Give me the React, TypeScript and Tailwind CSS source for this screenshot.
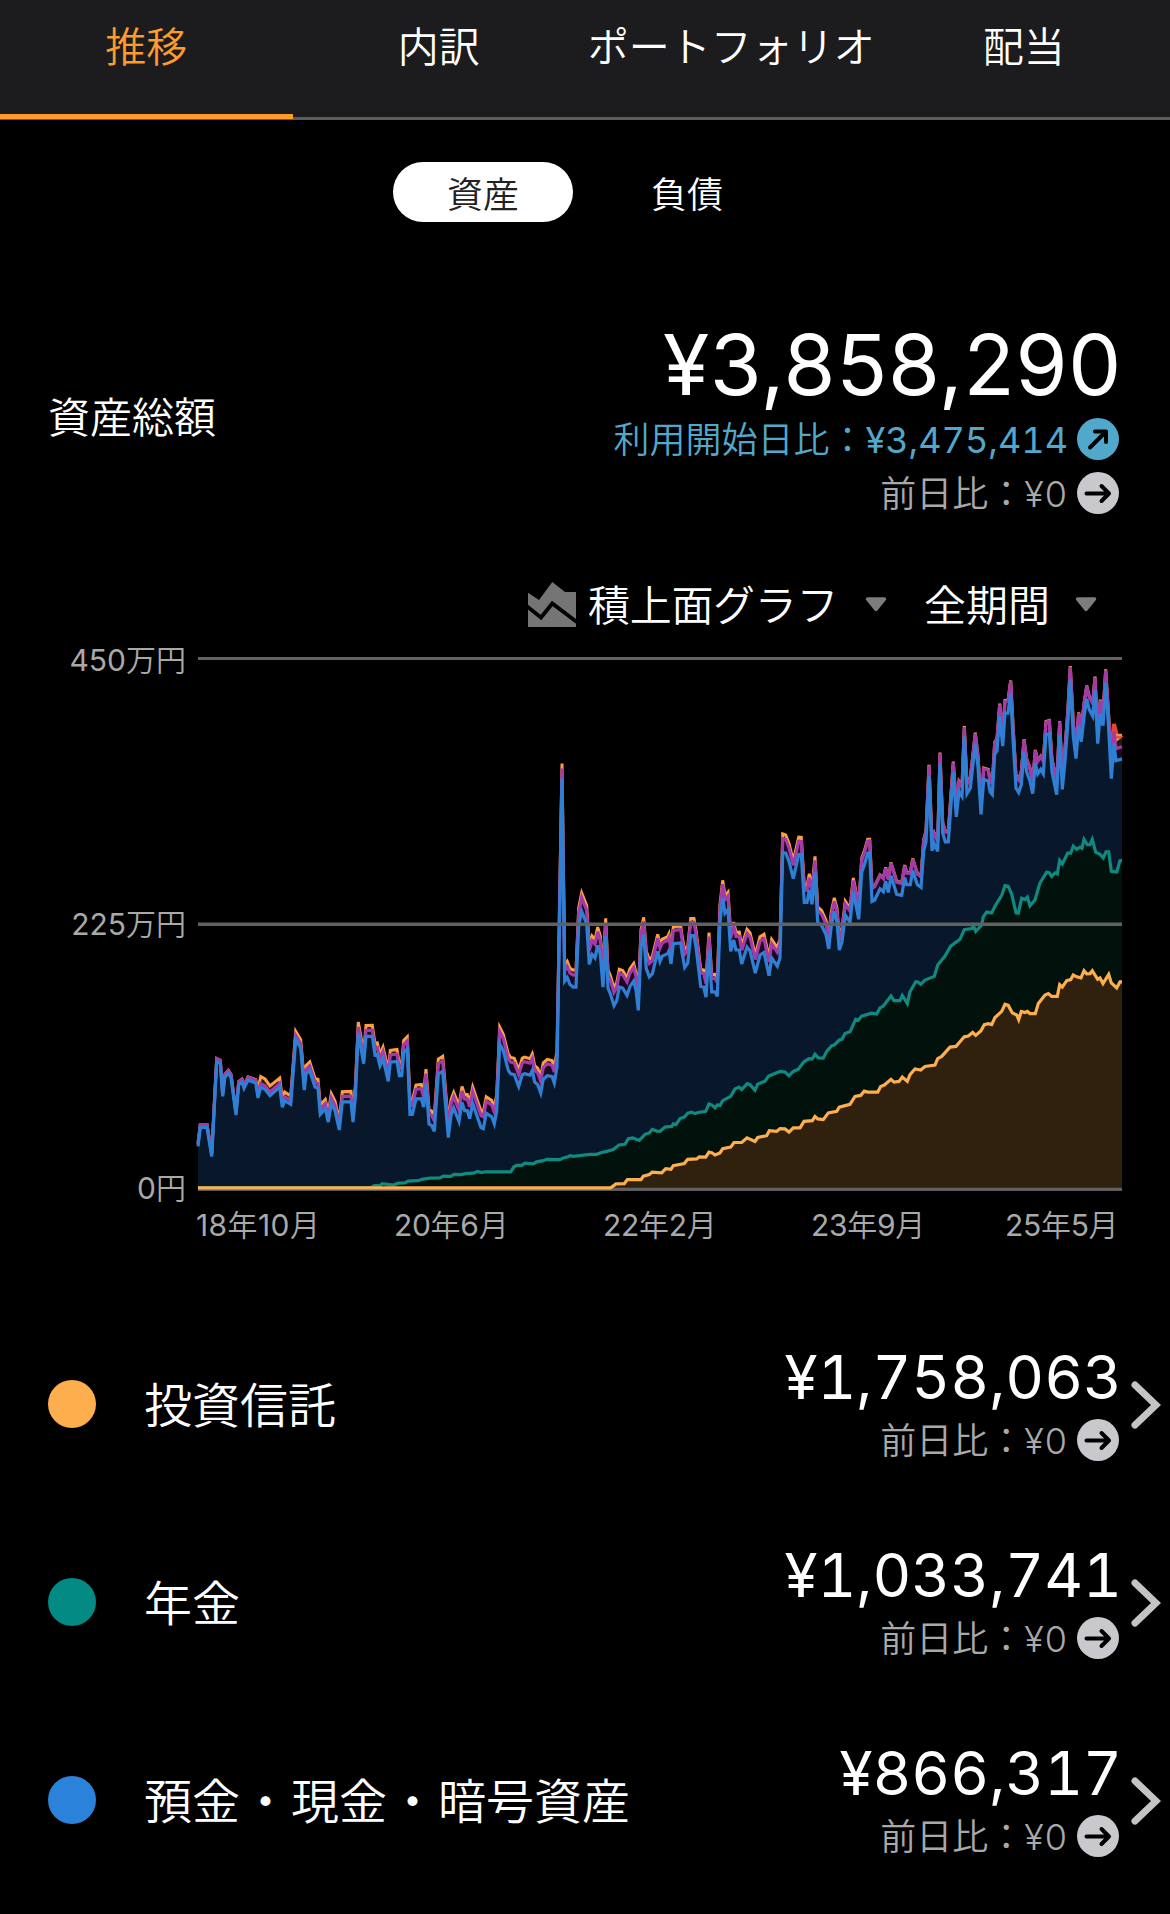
const JP = "font-['Inter','Noto_Sans_CJK_JP_DemiLight','Noto_Sans_CJK_JP',sans-serif]";

// Chart samples: x in thirds of a pixel, y in 1/2.8 pixel, per horizontal chunk of the plot.
const CHUNK = 930;
const toX = (u: number) => 180 + u / 3;
const toY = (v: number) => 640 + v / 2.8;

const parse = (chunks: string[]): number[][] =>
  chunks.flatMap((c, i) =>
    c.trim().split(/\s+/).map((p) => {
      const [u, v] = p.split(',').map(Number);
      return [u + i * CHUNK, v];
    }),
  );

const cash = parse([
  `54,1418 61,1365 81,1365 95,1446 110,1180 121,1185 128,1278 134,1225 145,1213 153,1225 168,1330 176,1245 186,1238 192,1255 204,1232 227,1240 234,1282 242,1252 255,1258 270,1276 299,1252 307,1308 314,1290 332,1300 347,1118 362,1142 373,1260 378,1215 389,1205 405,1252 414,1255 421,1328 436,1312 445,1350 454,1297 465,1318 478,1372 487,1293 513,1293 519,1350 526,1280 535,1100 551,1186 558,1110 577,1110 585,1162 592,1160 600,1192 609,1172 625,1236 631,1182 651,1180 658,1220 665,1220 671,1155 682,1145 690,1328 697,1328 708,1285 724,1284 731,1308 738,1242 747,1355 755,1360 763,1376 775,1215 788,1208 805,1393 813,1330 821,1310 837,1348 846,1295 854,1318 862,1318 869,1340 878,1298 903,1365 910,1368 919,1325 935,1335 943,1355 950,1320`,
  `29,1130 40,1150 55,1205 62,1215 73,1217 86,1250 97,1217 104,1214 120,1218 127,1205 134,1238 143,1245 152,1268 160,1230 172,1220 186,1222 193,1240 201,1195 216,388 224,955 232,945 240,965 250,972 258,972 266,800 275,760 290,795 298,908 306,880 315,890 323,855 331,880 339,972 347,830 354,975 361,990 372,1024 380,1010 388,972 398,975 411,995 420,970 431,955 438,980 445,1037 453,860 461,825 469,920 478,943 487,935 503,872 510,900 517,885 533,878 537,870 543,907 550,850 572,848 576,875 584,917 593,905 602,828 612,828 618,860 632,970 641,972 648,1000 657,868 665,985 675,985 682,998 690,790 698,722 705,765 714,755 722,872 731,840 738,868 748,868 755,907 771,860 780,870 796,933 810,882 822,875 837,940 845,890 862,913 870,890 878,595 887,597 897,620 910,668 926,600 934,600 943,735 951,735 958,700 966,740`,
  `45,650 53,790 65,800 78,825 86,865 94,800 103,760 111,790 118,868 126,845 136,770 150,790 160,705 176,782 185,650 193,630 203,597 209,597 216,732 224,728 240,697 250,705 257,675 265,707 273,660 290,712 305,715 314,665 320,685 331,685 338,645 352,685 363,693 371,590 378,565 387,380 396,590 403,570 413,592 420,345 428,540 436,565 445,565 460,370 469,495 477,425 486,438 493,270 501,430 511,415 526,290 534,355 543,488 551,390 565,395 570,425 577,433 584,320 591,310 599,213 608,297 615,205 624,205 632,150 640,290 648,415 656,427 664,405 672,315 680,370 690,395 698,430 706,345 713,375 722,362 730,375 738,265 748,262 756,370 770,433 779,265 787,418 795,340 803,240 811,110 820,270 828,332 836,240 844,285 852,215 860,165 868,195 878,213 885,140 893,290 901,205 909,240 917,120 926,250 934,388 942,290 948,338 966,333`,
]);

const pension = parse([
  `54,1534 572,1534 583,1528 600,1527 607,1522 640,1526 655,1521 675,1520 684,1515 715,1514 725,1510 750,1507 780,1506 790,1501 812,1502 822,1496 845,1497 855,1494 880,1493 893,1488 905,1491 915,1489`,
  `62,1489 72,1475 80,1471 95,1471 105,1465 130,1467 140,1461 160,1458 170,1454 210,1455 220,1450 235,1447 240,1444 250,1446 300,1440 320,1440 335,1435 350,1432 370,1427 387,1414 405,1412 415,1396 428,1394 448,1401 465,1384 478,1380 487,1370 500,1375 510,1376 525,1364 545,1362 550,1355 558,1357 570,1340 583,1336 593,1325 605,1322 615,1326 625,1323 647,1320 657,1299 667,1303 675,1310 682,1302 690,1303 698,1290 722,1278 735,1257 747,1252 755,1259 772,1242 780,1245 795,1261 803,1244 825,1235 836,1221 870,1208 885,1210 897,1220 910,1208 925,1202`,
  `12,1181 27,1172 37,1173 45,1160 55,1170 70,1171 80,1152 95,1136 103,1134 118,1120 126,1118 135,1102 150,1097 167,1062 175,1065 185,1053 215,1045 230,1047 240,1030 250,1025 273,997 282,1010 300,1010 307,995 322,1018 330,985 347,957 353,957 362,964 375,952 403,942 413,910 435,885 452,857 480,838 493,811 515,808 520,800 527,816 545,798 550,775 560,762 575,764 585,745 605,715 615,688 625,690 635,712 648,764 655,765 665,723 675,727 682,720 690,744 705,728 720,680 740,650 748,652 755,662 765,652 772,655 779,617 787,627 803,597 812,597 820,577 830,586 840,580 846,583 852,558 862,573 870,573 877,558 887,594 900,600 910,610 918,593 926,593 934,648 950,650 960,618 966,617`,
]);

const trust = parse([
  `54,1534`,
  `362,1534 378,1523 403,1522 412,1511 453,1511 460,1501 478,1497 487,1490 515,1492 527,1480 543,1482 550,1472 583,1466 593,1454 620,1453 628,1447 647,1448 657,1434 667,1436 675,1442 690,1436 698,1424 722,1420 732,1407 755,1407 771,1394 795,1404 803,1393 830,1388 838,1374 860,1376 870,1368 885,1369 897,1378 910,1366`,
  `0,1366 12,1348 37,1346 45,1334 53,1341 70,1343 85,1324 110,1320 118,1308 150,1300 165,1278 182,1275 193,1263 203,1266 233,1266 242,1250 253,1246 273,1230 282,1238 297,1236 307,1224 322,1236 330,1217 345,1201 362,1204 375,1194 405,1190 413,1172 425,1166 450,1140 468,1138 478,1127 493,1111 505,1109 518,1099 527,1107 543,1094 553,1077 565,1074 575,1077 585,1057 605,1040 615,1020 625,1023 637,1044 650,1050 656,1063 664,1040 675,1043 682,1040 690,1046 706,1046 715,1018 735,994 745,990 755,998 772,998 779,965 787,972 800,954 812,951 820,938 830,943 843,946 852,926 860,935 870,934 877,926 893,950 900,946 909,962 926,936 934,960 950,974 960,957 966,957`,
]);

// Layers stacked above cash: [u, height of points layer, height of securities layer].
const lifts = [
  [54, 8, 8], [227, 8, 9], [238, 10, 30], [347, 11, 22], [558, 17, 31], [680, 22, 34], [708, 27, 39],
  [878, 33, 46], [1102, 33, 46], [1146, 28, 42], [1205, 38, 52], [1480, 37, 47], [1808, 39, 52], [1905, 33, 44],
  [1963, 28, 38], [2063, 34, 39], [2090, 38, 40], [2250, 28, 30], [2360, 26, 29], [2500, 35, 37],
  [2670, 35, 37], [2796, 35, 38], [2803, 34, 55], [2826, 34, 66],
];
const liftAt = (u: number, k: number) => {
  const i = Math.max(1, lifts.findIndex((l) => l[0] >= u));
  const [a, b] = [lifts[i - 1], lifts[i]];
  return a[k] + ((b[k] - a[k]) * (u - a[0])) / (b[0] - a[0]);
};
const raise = (k: number) => cash.map(([u, v]) => [u, v - liftAt(u, k)]);
const points = raise(1);
const securities = raise(2);

const line = (d: number[][]) => 'M' + d.map(([u, v]) => `${toX(u).toFixed(1)} ${toY(v).toFixed(1)}`).join('L');
const area = (d: number[][]) => `${line(d)}L1122 1189L198 1189Z`;

const layers = [
  { data: securities, stroke: '#ff9f45', fill: '#2a1606' },
  { data: points, stroke: '#a23aa8', fill: '#1d0822' },
  { data: cash, stroke: '#2f80d5', fill: '#08182a' },
  { data: pension, stroke: '#0e8a80', fill: '#01110b' },
  { data: trust, stroke: '#fdae4f', fill: '#30210f' },
];

function Chart() {
  return (
    <svg width="972" height="570" viewBox="198 640 972 570" className="shrink-0 overflow-visible">
      <path d="M198 658.6H1122M198 1189.3H1122" stroke="#616161" strokeWidth="3" />
      {layers.map((l) => <path key={l.fill} d={area(l.data)} fill={l.fill} />)}
      <path d="M198 1189.3H1122" stroke="#616161" strokeWidth="3" />
      {layers.slice(0, 1).map((l) => (
        <path key={l.stroke} d={line(l.data)} fill="none" stroke={l.stroke} strokeWidth="3" />
      ))}
      <path d="M1111.5 745L1114 724L1117 736.500L1122 736.500" fill="none" stroke="#e8442c" strokeWidth="4" />
      <path d="M1116 735H1122" stroke="#ff8a3c" strokeWidth="2.500" />
      {layers.slice(1).map((l) => (
        <path key={l.stroke} d={line(l.data)} fill="none" stroke={l.stroke} strokeWidth="3.2" />
      ))}
      <path d="M198 924.3H1122" stroke="#616161" strokeWidth="3.500" />
    </svg>
  );
}

function Arrow({ up = false }: { up?: boolean }) {
  return (
    <svg width="42" height="42" viewBox="0 0 42 42" className="shrink-0">
      <circle cx="21" cy="21" r="21" fill={up ? '#52a8cb' : '#c9c8cd'} />
      <g stroke="#000" strokeWidth="4" fill="none" strokeLinecap="round" strokeLinejoin="round">
        {up ? <path d="M13 29.500L29 13.500M18 13.500H29V24" /> : <path d="M9.500 21.500H32M24.500 14L32 21.500L24.500 29" />}
      </g>
    </svg>
  );
}

function DayDiff() {
  return (
    <div className="flex h-[42px] items-center text-[36px] leading-[42px] text-[#a9a9a9]">
      <span className="relative top-px">前日比：</span>
      <span className="relative top-px mr-[9px] font-light tracking-[1px]">¥0</span>
      <Arrow />
    </div>
  );
}

function Caret() {
  return (
    <svg width="22" height="15" viewBox="0 0 22 15" className="shrink-0">
      <path d="M2.500 2H19.500L11 12.500Z" fill="#7d7d7d" stroke="#7d7d7d" strokeWidth="3.500" strokeLinejoin="round" />
    </svg>
  );
}

const tabs = ['推移', '内訳', 'ポートフォリオ', '配当'];

const rows = [
  { name: '投資信託', amount: '¥1,758,063', dot: 'bg-[#ffae4e]' },
  { name: '年金', amount: '¥1,033,741', dot: 'bg-[#048a84]' },
  { name: '預金・現金・暗号資産', amount: '¥866,317', dot: 'bg-[#2b82da]' },
];

export default function App() {
  return (
    <div lang="ja" className={`${JP} h-[1914px] w-[1170px] overflow-hidden whitespace-nowrap bg-black text-white`}>
      <nav className="grid h-[120px] grid-cols-4 border-b-[3px] border-[#5c5c5e] bg-[#1c1c1e]">
        {tabs.map((t, i) => (
          <div
            key={t}
            className={
              i === 0
                ? 'relative flex h-[119px] justify-center border-b-[5px] border-[#ff9a2e] pt-[23px] text-[41px] leading-[48px] text-[#ff9a2e]'
                : 'flex justify-center pt-[23px] text-[41px] leading-[48px]'
            }
          >
            {t}
          </div>
        ))}
      </nav>

      <div className="mt-[42px] flex h-[60px] justify-center gap-6 text-[36px] leading-[66px]">
        <div className="w-[180px] rounded-full bg-white text-center text-[#222]">資産</div>
        <div className="w-[180px] text-center">負債</div>
      </div>

      <section className="mt-[100px] flex h-[192px] items-center justify-between pl-[48px] pr-[51px]">
        <div className="text-[42px] leading-[48px]">資産総額</div>
        <div className="flex flex-col items-end">
          <div className="-mr-[3px] h-[84px] text-[84px] leading-[83px] tracking-[0.7px]">¥3,858,290</div>
          <div className="mt-[11px] flex h-[42px] items-center text-[36px] leading-[42px] text-[#52a8cb]">
            <span className="relative top-px">利用開始日比：</span>
            <span className="relative top-px mr-[9px] tabular-nums">¥3,475,414</span>
            <Arrow up />
          </div>
          <div className="mt-3">
            <DayDiff />
          </div>
        </div>
      </section>

      <div className="mt-[66px] flex h-[48px] items-center pl-[528px] text-[42px] leading-[48px]">
        <svg width="48" height="45" viewBox="0 0 48 45" className="mr-[12px] shrink-0">
          <path d="M0 10.700L11 18L24.300 0L37 10H48V45H0Z" fill="#757575" />
          <path d="M-2 23.500L13 35.500L24.300 21.500L50 41" fill="none" stroke="#000" strokeWidth="3.800" />
        </svg>
        <span className="relative top-[2px] w-[277px] tracking-[-0.3px]">積上面グラフ</span>
        <Caret />
        <span className="relative top-[2px] ml-[37px] w-[151px]">全期間</span>
        <Caret />
      </div>

      <div className="mt-[12px] flex h-[570px]">
        <div className="flex h-[568px] w-[198px] flex-col justify-between pr-[12px] text-right text-[30px] leading-[40px] text-[#a9a9a9]">
          <span>450万円</span>
          <span>225万円</span>
          <span>0円</span>
        </div>
        <Chart />
      </div>
      <div className="flex h-[36px] pl-[196px] text-[30px] leading-[30px] text-[#a9a9a9]">
        <span className="w-[198px] tracking-[0.4px]">18年10月</span>
        <span className="w-[209px] tracking-[-0.3px]">20年6月</span>
        <span className="w-[208px] tracking-[-0.3px]">22年2月</span>
        <span className="w-[194px] tracking-[-0.3px]">23年9月</span>
        <span className="tracking-[-0.3px]">25年5月</span>
      </div>

      <div className="mt-[59px]">
        {rows.map((r) => (
          <div key={r.name} className="flex h-[198px] pl-[48px] pr-[9px]">
            <div className={`${r.dot} mt-[75px] size-[48px] shrink-0 rounded-full`} />
            <div className="ml-[48px] mt-[73px] flex grow text-[48px] leading-[56px]">
              {r.name.split(/(・)/).map((part, i) => (
                <span key={i} className={part === '・' ? 'mx-[1.5px]' : ''}>{part}</span>
              ))}
            </div>
            <div className="mt-[40px] flex flex-col items-end">
              <div className="-mr-[3px] mb-[11px] h-[63px] text-[60px] leading-[64px] tabular-nums">{r.amount}</div>
              <DayDiff />
            </div>
            <svg width="30" height="48" viewBox="0 0 30 48" className="ml-[12px] mt-[76px] shrink-0">
              <path d="M4 4L25 24L4 44" fill="none" stroke="#c4c4c4" strokeWidth="7" strokeLinecap="round" strokeLinejoin="miter" />
            </svg>
          </div>
        ))}
      </div>
    </div>
  );
}
